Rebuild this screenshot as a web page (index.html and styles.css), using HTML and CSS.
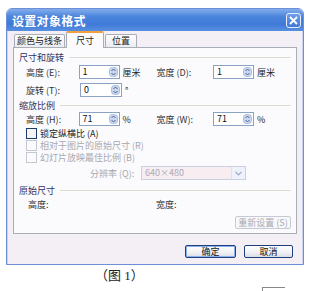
FILE: index.html
```html
<!DOCTYPE html>
<html lang="zh-CN">
<head>
  <meta charset="UTF-8" />
  <title>设置对象格式</title>
  <link rel="stylesheet" href="styles.css">
</head>
<body>
  <div class="dialog">
    <div class="titlebar">
      <span class="title">设置对象格式</span>
      <span class="close">
        <svg width="9" height="9" viewBox="0 0 9 9"><path d="M1 1L8 8M8 1L1 8" stroke="#fff" stroke-width="1.8"/></svg>
      </span>
    </div>
    <div class="body">
      <div class="tabs">
        <div class="tab">颜色与线条</div>
        <div class="tab active">尺寸</div>
        <div class="tab">位置</div>
      </div>
      <div class="panel">
        <div class="group g1"><span>尺寸和旋转</span></div>
        <div class="row r1">
          <span class="label">高度 (E):</span>
          <span class="spin"><span class="field">1</span><span class="arrows"><svg width="9" height="10" viewBox="0 0 9 10"><rect x="0.5" y="0.5" width="8" height="9" rx="3" fill="#c9d8f0" stroke="#a8bde0"/><path d="M2.5 4L4.5 2L6.5 4M2.5 6L4.5 8L6.5 6" fill="none" stroke="#4d6090" stroke-width="1"/></svg></span></span>
          <span class="unit">厘米</span>
          <span class="label2">宽度 (D):</span>
          <span class="spin"><span class="field">1</span><span class="arrows"><svg width="9" height="10" viewBox="0 0 9 10"><rect x="0.5" y="0.5" width="8" height="9" rx="3" fill="#c9d8f0" stroke="#a8bde0"/><path d="M2.5 4L4.5 2L6.5 4M2.5 6L4.5 8L6.5 6" fill="none" stroke="#4d6090" stroke-width="1"/></svg></span></span>
          <span class="unit">厘米</span>
        </div>
        <div class="row r2">
          <span class="label">旋转 (T):</span>
          <span class="spin"><span class="field">0</span><span class="arrows"><svg width="9" height="10" viewBox="0 0 9 10"><rect x="0.5" y="0.5" width="8" height="9" rx="3" fill="#c9d8f0" stroke="#a8bde0"/><path d="M2.5 4L4.5 2L6.5 4M2.5 6L4.5 8L6.5 6" fill="none" stroke="#4d6090" stroke-width="1"/></svg></span></span>
          <span class="unit">°</span>
        </div>
        <div class="group g2"><span>缩放比例</span></div>
        <div class="row">
          <span class="label">高度 (H):</span>
          <span class="spin"><span class="field">71</span><span class="arrows"><svg width="9" height="10" viewBox="0 0 9 10"><rect x="0.5" y="0.5" width="8" height="9" rx="3" fill="#c9d8f0" stroke="#a8bde0"/><path d="M2.5 4L4.5 2L6.5 4M2.5 6L4.5 8L6.5 6" fill="none" stroke="#4d6090" stroke-width="1"/></svg></span></span>
          <span class="unit">%</span>
          <span class="label2">宽度 (W):</span>
          <span class="spin"><span class="field">71</span><span class="arrows"><svg width="9" height="10" viewBox="0 0 9 10"><rect x="0.5" y="0.5" width="8" height="9" rx="3" fill="#c9d8f0" stroke="#a8bde0"/><path d="M2.5 4L4.5 2L6.5 4M2.5 6L4.5 8L6.5 6" fill="none" stroke="#4d6090" stroke-width="1"/></svg></span></span>
          <span class="unit">%</span>
        </div>
        <div class="check"><span class="box"></span>锁定纵横比 (A)</div>
        <div class="check off"><span class="box"></span>相对于图片的原始尺寸 (R)</div>
        <div class="check off"><span class="box"></span>幻灯片放映最佳比例 (B)</div>
        <div class="row res">
          <span class="reslabel">分辨率 (Q):</span>
          <span class="select"><span class="value">640×480</span><span class="drop">
            <svg width="7" height="5" viewBox="0 0 7 5"><path d="M0.5 0.8L3.5 3.8L6.5 0.8" fill="none" stroke="#9aa8c8" stroke-width="1.2"/></svg>
          </span></span>
        </div>
        <div class="group g3"><span>原始尺寸</span></div>
        <div class="row orig">
          <span class="olabel">高度:</span>
          <span class="olabel">宽度:</span>
        </div>
        <div class="reset-row"><span class="reset">重新设置 (S)</span></div>
      </div>
      <div class="buttons">
        <span class="btn ok">确定</span>
        <span class="btn">取消</span>
      </div>
    </div>
  </div>
  <div class="caption">（图 1）</div>
  <div class="corner"></div>
</body>
</html>
```

FILE: styles.css
```css
body {
  margin: 0;
  background-color: #fff;
  font-family: "Noto Sans CJK SC", "Liberation Sans", sans-serif;
  font-size: 9px;
  color: #333;
}

.dialog {
  margin: 8px 0 0 6px;
  width: 298px;
  height: 257px;
  box-sizing: border-box;
  border: 1px solid #6c8fd8;
  border-radius: 6px 6px 0 0;
  background-color: #f4eff4;
  display: flex;
  flex-direction: column;
  overflow: hidden;
}

.titlebar {
  height: 22px;
  flex-shrink: 0;
  background: linear-gradient(#83adec, #4a84dc 35%, #3f7ad8 70%, #5890e0);
  display: flex;
  align-items: center;
  justify-content: space-between;
  padding: 0 2px 0 5px;
}

.title {
  color: #fff;
  font-weight: bold;
  font-size: 12px;
  letter-spacing: 0.3px;
}

.close {
  width: 15px;
  height: 15px;
  box-sizing: border-box;
  border: 1px solid #e8eefa;
  border-radius: 3px;
  background: linear-gradient(#6f9fea, #3f78d8);
  display: flex;
  align-items: center;
  justify-content: center;
}

.body {
  flex: 1;
  border-left: 1px solid #c9d2ee;
  border-right: 1px solid #c9d2ee;
  display: flex;
  flex-direction: column;
}

.tabs {
  display: flex;
  align-items: flex-end;
  height: 16px;
  margin: 0 0 0 6px;
}

.tab {
  height: 12px;
  line-height: 12px;
  padding: 0 2px;
  border: 1px solid #a9adb8;
  border-bottom: none;
  border-radius: 2px 2px 0 0;
  background: linear-gradient(#ffffff, #ecebf0);
  color: #222;
  margin-right: 1px;
  white-space: nowrap;
}

.tab:last-child {
  padding: 0 6px;
}

.tab.active {
  height: 15px;
  line-height: 15px;
  padding: 0 9px;
  background: #fbfbfd;
  border-top: 2px solid #f0a040;
  position: relative;
  top: 1px;
}

.panel {
  margin: 0 5px;
  height: 187px;
  box-sizing: border-box;
  border: 1px solid #a9adb8;
  background-color: #fbfbfd;
  padding: 0 5px;
}

.group {
  display: flex;
  align-items: center;
  height: 12px;
  color: #303060;
}

.group::after {
  content: "";
  flex: 1;
  height: 1px;
  background-color: #dcdcd4;
  margin-left: 5px;
}

.g1 { margin-top: 3px; }
.g2 { margin-top: 2px; height: 11px; }
.g3 { margin-top: 3px; }

.row {
  display: flex;
  align-items: center;
  height: 16px;
  padding-left: 7px;
}

.r1 { margin-top: 1px; }
.r2 { margin-top: 2px; }

.label {
  width: 54px;
}

.label2 {
  width: 58px;
}

.spin {
  display: flex;
  width: 42px;
  height: 14px;
  box-sizing: border-box;
  border: 1px solid #8aa2c4;
  background-color: #fff;
}

.field {
  flex: 1;
  padding-left: 3px;
  line-height: 12px;
  color: #111;
}

.arrows {
  width: 11px;
  display: flex;
  align-items: center;
  justify-content: center;
}

.unit {
  width: 38px;
  padding-left: 3px;
  box-sizing: border-box;
  color: #222;
}

.check {
  display: flex;
  align-items: center;
  height: 12px;
  padding-left: 7px;
  color: #222;
}

.box {
  width: 9px;
  height: 9px;
  border: 1px solid #1c3c6c;
  background-color: #f4f4f4;
  margin-right: 3px;
}

.check.off {
  color: #a8a8b0;
}

.check.off .box {
  border-color: #c4c8d0;
  background-color: #fbfbfd;
}

.res {
  padding-left: 71px;
  margin-top: 2px;
}

.reslabel {
  width: 51px;
  color: #a8a8b0;
}

.select {
  display: flex;
  width: 105px;
  height: 14px;
  box-sizing: border-box;
  border: 1px solid #cbd0e0;
  background-color: #f8eef1;
}

.value {
  flex: 1;
  padding-left: 3px;
  line-height: 12px;
  color: #aaaab8;
}

.drop {
  width: 13px;
  display: flex;
  align-items: center;
  justify-content: center;
  background-color: #eef2fa;
  border-left: 1px solid #dde2ee;
}

.orig {
  height: 14px;
  margin-top: 1px;
  padding-left: 9px;
}

.olabel {
  width: 128px;
}

.reset-row {
  display: flex;
  justify-content: flex-end;
  margin-top: 5px;
}

.reset {
  width: 54px;
  height: 11px;
  line-height: 11px;
  text-align: center;
  border: 1px solid #c6cad6;
  border-radius: 2px;
  color: #a8a8b0;
  background-color: #f8f8fa;
}

.buttons {
  display: flex;
  justify-content: flex-end;
  gap: 8px;
  margin: 11px 9px 0 0;
}

.btn {
  width: 47px;
  height: 11px;
  line-height: 11px;
  text-align: center;
  border: 1px solid #1f3f7a;
  border-radius: 2px;
  background: linear-gradient(#ffffff, #f0f0f4 60%, #d8dce8);
  color: #111;
}

.btn.ok {
  width: 49px;
  box-shadow: inset 0 0 0 1px #8ab0ee;
}

.caption {
  margin: 4px 0 0 95px;
  height: 14px;
  line-height: 14px;
  font-family: "Liberation Serif", "Noto Sans CJK SC", serif;
  font-size: 13px;
  color: #222;
}

.corner {
  margin: 4px 0 0 262px;
  width: 22px;
  height: 10px;
  border-top: 1px solid #888;
  border-left: 1px solid #888;
}
```
